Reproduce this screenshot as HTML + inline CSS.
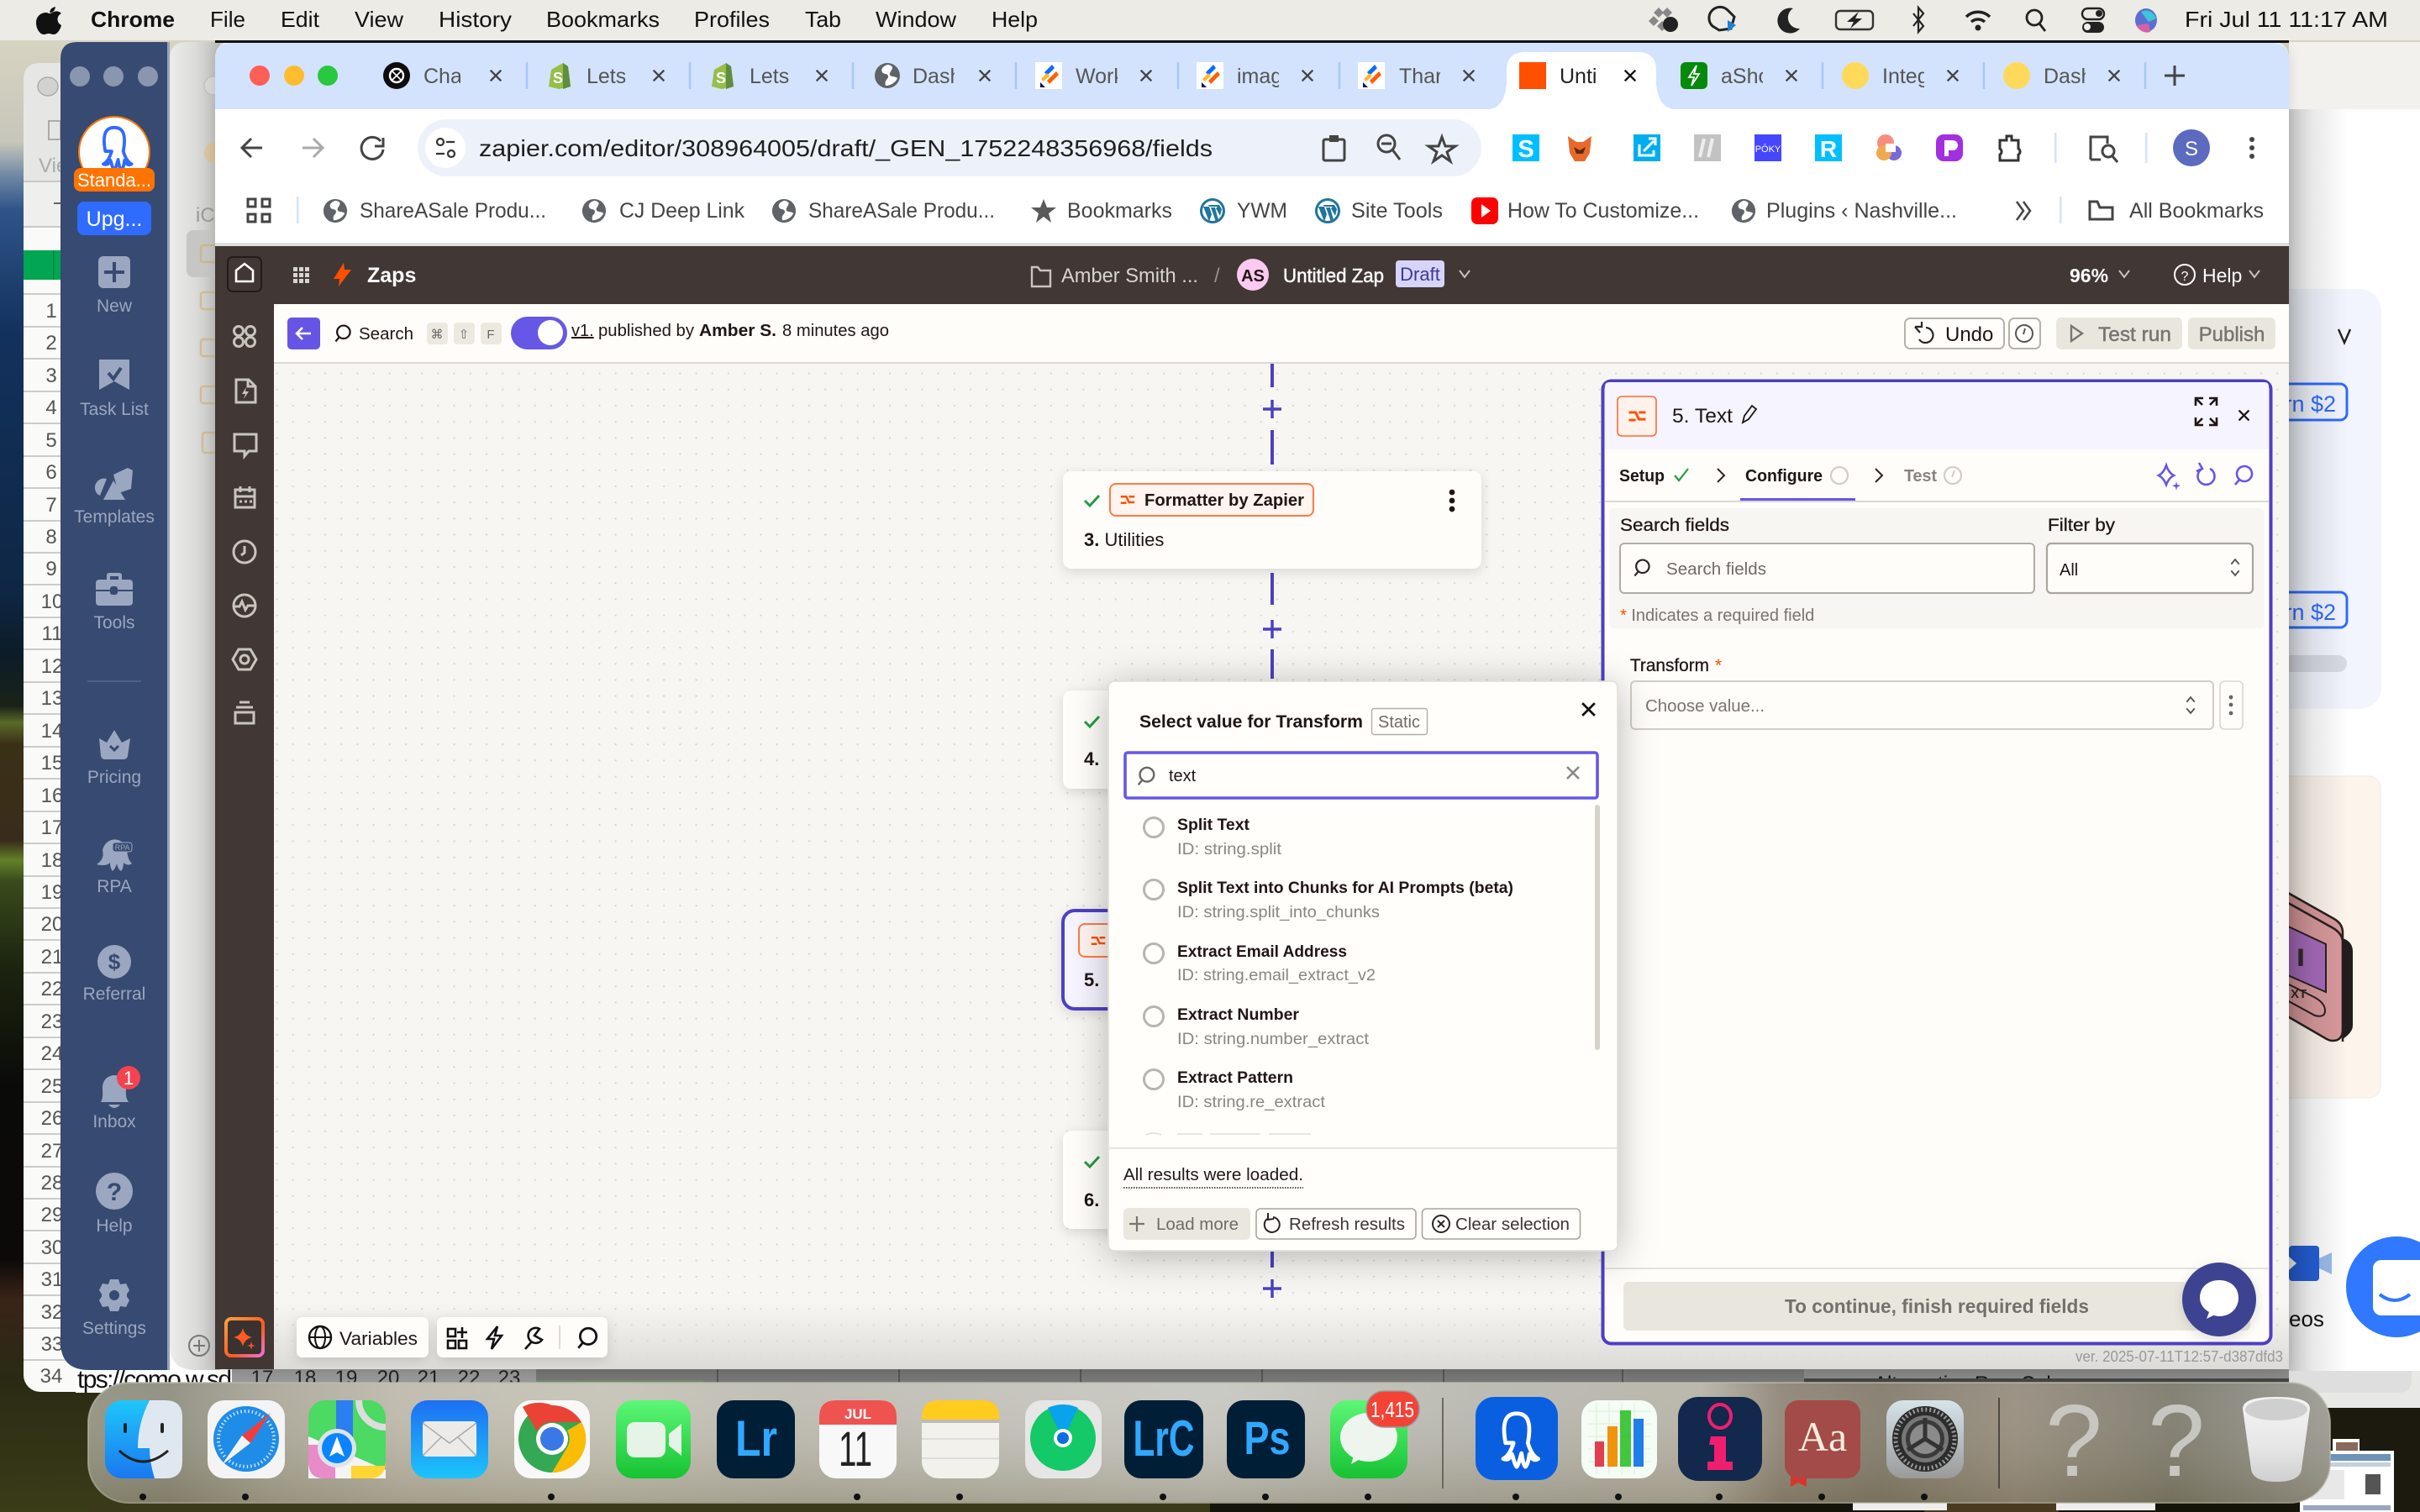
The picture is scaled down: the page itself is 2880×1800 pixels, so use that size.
<!DOCTYPE html>
<html><head><meta charset="utf-8"><title>Zapier editor</title>
<style>
html,body{margin:0;padding:0;width:2880px;height:1800px;overflow:hidden;background:#111}
svg{display:block;font-family:"Liberation Sans",sans-serif}
.m{font-size:26px;fill:#111}
.tb{font-size:25px;fill:#555}
.bm{font-size:25px;fill:#444}
.sl{font-size:21px;fill:#9ba6c0;text-anchor:middle}
.rn{font-size:24px;fill:#555;text-anchor:middle}
.d{font-size:21px;fill:#201515}
.b{font-weight:700}
.g{fill:#888}
.i{fill:none;stroke:#c9c4be;stroke-width:3}
.k{fill:none;stroke:#2b2523;stroke-width:2.5}
.t{fill:none;stroke:#444;stroke-width:3}
</style></head><body>
<svg width="2880" height="1800" viewBox="0 0 2880 1800" xmlns="http://www.w3.org/2000/svg">
<defs>
<linearGradient id="wall" x1="0" y1="0" x2="0" y2="1"><stop offset="0" stop-color="#ded9c4"/><stop offset=".094" stop-color="#c7c6bb"/><stop offset=".117" stop-color="#6d86a4"/><stop offset=".139" stop-color="#2f5488"/><stop offset=".222" stop-color="#12315c"/><stop offset=".389" stop-color="#0f2745"/><stop offset=".433" stop-color="#0c1c28"/><stop offset=".467" stop-color="#1a2218"/><stop offset=".478" stop-color="#5a6a28"/><stop offset=".492" stop-color="#3a3018"/><stop offset=".556" stop-color="#3a2c1a"/><stop offset=".569" stop-color="#63802a"/><stop offset=".583" stop-color="#3a4a1c"/><stop offset=".64" stop-color="#1c2410"/><stop offset=".72" stop-color="#0a0a08"/><stop offset=".833" stop-color="#0c0a08"/><stop offset=".86" stop-color="#3a2418"/><stop offset=".91" stop-color="#2a2a14"/><stop offset="1" stop-color="#3a3c18"/></linearGradient>
<linearGradient id="dock" x1="0" y1="0" x2="1" y2="0"><stop offset="0" stop-color="#8e8e7c"/><stop offset=".035" stop-color="#8a897a"/><stop offset=".08" stop-color="#a8a596"/><stop offset=".14" stop-color="#bcb8aa"/><stop offset=".23" stop-color="#c4c2b5"/><stop offset=".32" stop-color="#bcbab0"/><stop offset=".5" stop-color="#c6c6c0"/><stop offset=".62" stop-color="#b6b6ae"/><stop offset=".72" stop-color="#b5b1a5"/><stop offset=".755" stop-color="#8b8173"/><stop offset=".8" stop-color="#7e7767"/><stop offset=".86" stop-color="#93897a"/><stop offset=".93" stop-color="#787668"/><stop offset="1" stop-color="#989790"/></linearGradient>
<linearGradient id="dockv" x1="0" y1="0" x2="0" y2="1"><stop offset="0" stop-color="#fff" stop-opacity=".08"/><stop offset="1" stop-color="#6b6040" stop-opacity=".3"/></linearGradient>
<linearGradient id="w3" x1="0" y1="0" x2="1" y2="0"><stop offset="0" stop-color="#ecECEA"/><stop offset=".5" stop-color="#dcdcda"/><stop offset="1" stop-color="#bcbcba"/></linearGradient>
<linearGradient id="csh" x1="0" y1="0" x2="0" y2="1"><stop offset="0" stop-color="#dcdbd8" stop-opacity="0"/><stop offset="1" stop-color="#dcdbd8"/></linearGradient>
<linearGradient id="ai" x1="0" y1="0" x2="1" y2="1"><stop offset="0" stop-color="#ffa040"/><stop offset=".6" stop-color="#ff5a1f"/><stop offset="1" stop-color="#f070d0"/></linearGradient>
<linearGradient id="rsh" x1="0" y1="0" x2="1" y2="0"><stop offset="0" stop-color="#000" stop-opacity=".24"/><stop offset=".4" stop-color="#000" stop-opacity=".09"/><stop offset="1" stop-color="#000" stop-opacity="0"/></linearGradient>
<linearGradient id="fb" x1="0" y1="0" x2="0" y2="1"><stop offset="0" stop-color="#1fc6fb"/><stop offset="1" stop-color="#1a78ef"/></linearGradient>
<linearGradient id="ml" x1="0" y1="0" x2="0" y2="1"><stop offset="0" stop-color="#1d6ff2"/><stop offset="1" stop-color="#1dc4fb"/></linearGradient>
<linearGradient id="gr" x1="0" y1="0" x2="0" y2="1"><stop offset="0" stop-color="#5cf777"/><stop offset="1" stop-color="#17c232"/></linearGradient>
<linearGradient id="set" x1="0" y1="0" x2="0" y2="1"><stop offset="0" stop-color="#d6e4ea"/><stop offset="1" stop-color="#9a9a9a"/></linearGradient>
<linearGradient id="tr" x1="0" y1="0" x2="0" y2="1"><stop offset="0" stop-color="#f4f4f4"/><stop offset=".6" stop-color="#e6e6e6"/><stop offset="1" stop-color="#cfcfcf"/></linearGradient>
<pattern id="dots" width="19.2" height="19.2" patternUnits="userSpaceOnUse"><circle cx="3" cy="3" r="1.2" fill="#d8d6cf"/></pattern>
<filter id="sh" x="-30%" y="-30%" width="160%" height="160%"><feDropShadow dx="0" dy="6" stdDeviation="22" flood-color="#000" flood-opacity=".28"/></filter>
<filter id="ns" x="-10%" y="-15%" width="120%" height="140%"><feDropShadow dx="0" dy="4" stdDeviation="7" flood-color="#000" flood-opacity=".13"/></filter>
<clipPath id="altc"><rect x="2147" y="1630" width="700" height="11"/></clipPath>
<symbol id="globe" viewBox="0 0 32 32"><circle cx="16" cy="16" r="15" fill="#5f6368"/><path d="M16 3c-6 2-8 6-6 9s7 1 7 5-5 4-3 11c6 0 12-4 14-9-4-3-8-1-9-4s3-5 3-9c-1-2-4-3-6-3z" fill="#fff"/></symbol>
<symbol id="shop" viewBox="0 0 32 32"><path d="M6 9l14-8 6 4 3 24-14 3L3 29z" fill="#95bf47"/><path d="M20 1l6 4 3 24-9 3z" fill="#5e8e3e"/><text x="14" y="25" font-size="18" font-weight="700" fill="#fff" text-anchor="middle">S</text></symbol>
<symbol id="jot" viewBox="0 0 32 32"><rect width="32" height="32" fill="#fff"/><path d="M20 3l-9 9 3 4 9-9z" fill="#0a6cff"/><path d="M25 11l-11 11 3 4 11-11z" fill="#ff6100"/><path d="M14 13l-7 7 3 3 7-7z" fill="#ffb629"/><path d="M6 24v6h6z" fill="#0a1551"/></symbol>
<symbol id="wp" viewBox="0 0 32 32"><circle cx="16" cy="16" r="15" fill="#21759b"/><circle cx="16" cy="16" r="12" fill="#fff"/><path d="M5 11l7 18 3-9-3-9h-2zm8 0h9l-2 2 5 9 2-8-3-5H10z" fill="#21759b"/><path d="M14 12h5l4 15-3 2z" fill="#21759b"/></symbol>
<symbol id="sw" viewBox="0 0 32 32"><path d="M5 11h9l4 9h9M5 21h9M18 11h9" fill="none" stroke="#ff4f00" stroke-width="3.2"/></symbol>
<symbol id="x" viewBox="0 0 20 20"><path d="M3 3l14 14M17 3L3 17" fill="none" stroke="currentColor" stroke-width="2.6"/></symbol>
<symbol id="srch" viewBox="0 0 28 28"><circle cx="15" cy="12" r="9" fill="none" stroke="currentColor" stroke-width="2.6"/><path d="M9 19l-5 6" stroke="currentColor" stroke-width="2.6"/></symbol>
<symbol id="ud" viewBox="0 0 18 32"><path d="M3 11l6-7 6 7M3 21l6 7 6-7" fill="none" stroke="currentColor" stroke-width="2.4"/></symbol>
<symbol id="oct" viewBox="0 0 60 76"><path d="M16 42C10 10 20 5 30 5s20 5 14 37c3 10 7 17 13 20-5 3-9 0-11-6-1 8-3 14-5 16-3-3-4-11-5-17-2 6-3 13-6 17-3-3-4-11-6-16-2 6-6 8-11 6 6-3 10-10 13-20z" fill="none" stroke="currentColor" stroke-width="5" stroke-linejoin="round"/></symbol>
</defs>

<!-- wallpaper -->
<rect width="2880" height="1800" fill="url(#wall)"/>
<rect x="1440" y="1788" width="1440" height="12" fill="#15140a"/>
<rect x="2290" y="1788" width="160" height="12" fill="#4a3a20"/>
<rect x="105" y="1788" width="1335" height="12" fill="#3a3a1a"/>
<rect x="2760" y="1676" width="120" height="124" fill="#1c1a0e"/>
<rect x="2205" y="1788" width="112" height="10" fill="#eee"/><rect x="2447" y="1788" width="118" height="10" fill="#eee"/>
<rect x="2776" y="1713" width="32" height="30" fill="#fff"/><rect x="2780" y="1717" width="26" height="22" fill="#8a6a5c"/>
<rect x="2737" y="1727" width="112" height="73" fill="#fff"/><rect x="2741" y="1731" width="104" height="8" fill="#6d93b8"/><rect x="2741" y="1741" width="104" height="5" fill="#c4d0da"/><rect x="2750" y="1750" width="40" height="35" fill="#e8e8e8"/><rect x="2815" y="1755" width="18" height="24" fill="#555"/><rect x="2741" y="1792" width="104" height="6" fill="#9aa6c0"/>

<!-- spreadsheet window -->
<rect x="28" y="75" width="300" height="1582" rx="20" fill="#fafaf8"/>
<path d="M48 75h30v141H28V95q0-20 20-20z" fill="#e6e6e4"/>
<rect x="28" y="216" width="50" height="54" fill="#efefed"/>
<ellipse cx="57" cy="103" rx="12" ry="11" fill="#d2d2d0" stroke="#aaa" stroke-width="1.4"/>
<rect x="58" y="144" width="14" height="22" fill="none" stroke="#aaa" stroke-width="2"/>
<text x="46" y="205" font-size="24" fill="#aaa">Vie</text>
<path d="M28 216h50M28 270h50" stroke="#c8c8c6" stroke-width="2"/>
<rect x="64" y="241" width="10" height="2" fill="#666"/>
<rect x="28" y="298" width="50" height="35" fill="#00a651"/><rect x="63" y="298" width="1.5" height="35" fill="#068542"/>
<g stroke="#bbb" stroke-width="1.6"><path d="M28 350h50M28 389h50M28 427h50M28 466h50M28 504h50M28 543h50M28 581h50M28 620h50M28 658h50M28 696h50M28 735h50M28 773h50M28 812h50M28 850h50M28 889h50M28 927h50M28 966h50M28 1004h50M28 1043h50M28 1081h50M28 1119h50M28 1158h50M28 1196h50M28 1235h50M28 1273h50M28 1312h50M28 1350h50M28 1389h50M28 1427h50M28 1465h50M28 1504h50M28 1542h50M28 1581h50M28 1619h50"/></g>
<g class="rn">
<text x="61" y="378">1</text><text x="61" y="416">2</text><text x="61" y="455">3</text><text x="61" y="493">4</text><text x="61" y="532">5</text><text x="61" y="570">6</text><text x="61" y="609">7</text><text x="61" y="647">8</text><text x="61" y="685">9</text><text x="62" y="724">10</text><text x="62" y="762">11</text><text x="62" y="801">12</text><text x="62" y="839">13</text><text x="62" y="878">14</text><text x="62" y="916">15</text><text x="62" y="955">16</text><text x="62" y="993">17</text><text x="62" y="1032">18</text><text x="62" y="1070">19</text><text x="62" y="1108">20</text><text x="62" y="1147">21</text><text x="62" y="1185">22</text><text x="62" y="1224">23</text><text x="62" y="1262">24</text><text x="62" y="1301">25</text><text x="62" y="1339">26</text><text x="62" y="1378">27</text><text x="62" y="1416">28</text><text x="62" y="1454">29</text><text x="62" y="1493">30</text><text x="62" y="1531">31</text><text x="62" y="1570">32</text><text x="62" y="1608">33</text><text x="61" y="1646">34</text>
</g>
<rect x="90" y="1620" width="186" height="38" fill="#fff"/><rect x="276" y="1620" width="362" height="38" fill="#999"/><rect x="638" y="1620" width="1509" height="38" fill="#777"/>
<rect x="638" y="1643" width="199" height="3" fill="#6f8a6f"/>
<text x="92" y="1652" font-size="30" fill="#111" textLength="184">tps://como.w.sd</text>
<g font-size="24" fill="#222" text-anchor="middle"><text x="312" y="1648">17</text><text x="363" y="1648">18</text><text x="412" y="1648">19</text><text x="462" y="1648">20</text><text x="510" y="1648">21</text><text x="558" y="1648">22</text><text x="606" y="1648">23</text></g>
<path d="M854 1630v16M1070 1630v16M1286 1630v16M1502 1630v16M1718 1630v16M1931 1630v16" stroke="#555" stroke-width="2"/>
<rect x="2147" y="1630" width="640" height="11" fill="#8a8a88"/><rect x="2147" y="1641" width="640" height="6" fill="#444"/>
<text x="2230" y="1655" font-size="24" fill="#111" clip-path="url(#altc)">Alternative Row Color</text>

<!-- right window behind -->
<rect x="2724" y="1620" width="156" height="56" fill="#e8e8e6"/>
<rect x="2724" y="1620" width="146" height="38" rx="14" fill="#dedede"/>
<rect x="2724" y="50" width="156" height="1582" fill="#fff"/>
<rect x="2724" y="50" width="156" height="80" fill="#f2f1ee"/>
<rect x="2700" y="344" width="134" height="500" rx="26" fill="#f2f5fe"/>
<path d="M2783 392l7 16 7-16" fill="none" stroke="#222" stroke-width="2.4"/>
<rect x="2680" y="457" width="113" height="43" rx="8" fill="none" stroke="#2f6bff" stroke-width="3"/>
<text x="2780" y="490" font-size="27" fill="#2f6bff" text-anchor="end">rn $2</text>
<rect x="2680" y="705" width="113" height="42" rx="8" fill="none" stroke="#2f6bff" stroke-width="3"/>
<text x="2780" y="738" font-size="27" fill="#2f6bff" text-anchor="end">rn $2</text>
<rect x="2700" y="780" width="93" height="20" rx="10" fill="#d8dbe4"/>
<rect x="2700" y="924" width="133" height="383" rx="14" fill="#fdf5ec" stroke="#f0f0ee" stroke-width="1.5"/>
<path d="M2700 1050l78 44q10 6 10 16l0 115q0 14-12 14-3 0-7-2l-69-40z" fill="#d99a9c" stroke="#2a2120" stroke-width="2.5"/>
<path d="M2700 1062l75 42q13 7 13 18v118" fill="none" stroke="#2a2120" stroke-width="2.5"/>
<path d="M2788 1117q12 4 12 16v88q0 8-12 16z" fill="#221c1c"/>
<path d="M2700 1092l68 32v57l-68-30z" fill="#a86cbc" stroke="#2a2120" stroke-width="2"/>
<text x="2730" y="1150" font-size="30" fill="#352a2a" textLength="16" lengthAdjust="spacingAndGlyphs">I</text>
<path d="M2700 1160l54 27q13 7 13 16t-12 6l-55-30z" fill="none" stroke="#2a2120" stroke-width="2"/>
<text x="2726" y="1188" font-size="15" font-weight="700" fill="#352a2a">XT</text>
<rect x="2724" y="1483" width="36" height="42" rx="4" fill="#2460d8"/><path d="M2760 1498l15-7v26l-15-7z" fill="#9cbcec"/><path d="M2724 1496l9 8-9 8z" fill="#fff"/>
<text x="2724" y="1579" font-size="26" fill="#111">eos</text>
<circle cx="2852" cy="1532" r="60" fill="#2f78ff"/><rect x="2824" y="1500" width="70" height="66" rx="10" fill="#fff"/><path d="M2832 1541q18 14 36 0" fill="none" stroke="#2f78ff" stroke-width="4"/>
<rect x="2724" y="130" width="70" height="1502" fill="url(#rsh)"/>

<!-- Octopus sidebar -->
<path d="M92 50H200V1631H106q-34 0-34-34V70q0-20 20-20z" fill="#374a72"/>
<rect x="199" y="50" width="3" height="1581" fill="#97a3bb"/>
<circle cx="95" cy="91" r="12" fill="#8a96b0"/><circle cx="135" cy="91" r="12" fill="#8a96b0"/><circle cx="176" cy="91" r="12" fill="#8a96b0"/>
<circle cx="136" cy="181" r="42" fill="#fff" stroke="#ff7a00" stroke-width="2"/>
<use href="#oct" x="108" y="148" width="56" height="58" color="#2f6bff"/>
<rect x="88" y="200" width="96" height="28" rx="8" fill="#ff7300"/>
<text x="136" y="222" font-size="22" fill="#fff" text-anchor="middle">Standa...</text>
<rect x="92" y="240" width="88" height="40" rx="8" fill="#2f6bff"/>
<text x="136" y="269" font-size="25" fill="#fff" text-anchor="middle">Upg...</text>
<g fill="#9ba6c0">
<rect x="117" y="305" width="38" height="38" rx="6"/>
<path d="M118 428h36v36l-18-10-18 10z"/>
<path d="M135 565l17-8 6 3-2 22-15 5zM113 582a11 11 0 0 1 14-12l-8 20a10 10 0 0 1-6-8zM135 572l14 23h-26z"/>
<rect x="114" y="690" width="44" height="31" rx="4"/><path d="M127 690v-5q0-3 3-3h12q3 0 3 3v5h-4v-4h-10v4z"/>
<path d="M118 879l9 5 9-15 9 15 10-5-3 21q-1 4-5 4h-22q-4 0-5-4z"/>
<path d="M122 1012a15 17 0 0 1 29 0c1 8 2 12 6 16-4 3-8 1-10-1 0 4-1 8-3 10-3-2-4-5-5-9-1 4-3 7-5 9-2-2-3-6-3-10-3 3-9 4-16 2 6-4 9-9 7-17z"/>
<circle cx="136" cy="1145" r="20"/>
<path d="M120 1312c3-6 2-10 2-18a14 14 0 0 1 28 0c0 8-1 12 3 18z"/><path d="M129 1315q7 8 14 0z"/>
<circle cx="136" cy="1418" r="22"/>
<circle cx="136" cy="1542" r="15"/>
<path d="M131 1523h10l2 6 7-1 4 8-4 6 4 6-4 8-7-1-2 6h-10l-2-6-7 1-4-8 4-6-4-6 4-8 7 1z"/>
</g>
<path d="M136 312v24M124 324h24" stroke="#374a72" stroke-width="4"/>
<path d="M129 444l6 7 9-13" fill="none" stroke="#374a72" stroke-width="4"/>
<rect x="114" y="702" width="44" height="2" fill="#374a72"/><rect x="131" y="698" width="9" height="10" rx="3" fill="#374a72"/>
<path d="M131 888l5 5 5-5" fill="none" stroke="#374a72" stroke-width="3"/>
<rect x="134" y="1003" width="23" height="11" rx="3" fill="#374a72" stroke="#9ba6c0" stroke-width="1"/>
<text x="145.500" y="1012" font-size="9" fill="#9ba6c0" text-anchor="middle">RPA</text>
<text x="136" y="1154" font-size="26" font-weight="700" fill="#374a72" text-anchor="middle">$</text>
<text x="136" y="1429" font-size="30" font-weight="700" fill="#374a72" text-anchor="middle">?</text>
<circle cx="136" cy="1542" r="6" fill="#374a72"/>
<circle cx="153" cy="1283" r="14" fill="#f4434f"/><text x="153" y="1291" font-size="22" fill="#fff" text-anchor="middle">1</text>
<text class="sl" x="136" y="371">New</text>
<text class="sl" x="136" y="494">Task List</text>
<text class="sl" x="136" y="622">Templates</text>
<text class="sl" x="136" y="748">Tools</text>
<rect x="104" y="810" width="64" height="2" fill="#4f5f85"/>
<text class="sl" x="136" y="932">Pricing</text>
<text class="sl" x="136" y="1062">RPA</text>
<text class="sl" x="136" y="1190">Referral</text>
<text class="sl" x="136" y="1342">Inbox</text>
<text class="sl" x="136" y="1466">Help</text>
<text class="sl" x="136" y="1588">Settings</text>

<!-- window 3 -->
<path d="M222 50h40V1631H232q-30 0-30-30V70q0-20 20-20z" fill="url(#w3)"/>
<circle cx="254" cy="102" r="11" fill="#d8d8d6" stroke="#bbb"/>
<circle cx="256" cy="182" r="13" fill="#dcc08c" opacity=".7"/>
<text x="233" y="264" font-size="24" fill="#999">iC</text>
<rect x="222" y="274" width="40" height="56" rx="8" fill="#c6c6c4"/>
<g opacity=".55"><rect x="239" y="292" width="22" height="20" rx="3" fill="none" stroke="#d0aa68" stroke-width="2.5"/>
<rect x="239" y="348" width="22" height="20" rx="3" fill="none" stroke="#d0aa68" stroke-width="2.5"/>
<rect x="239" y="404" width="22" height="20" rx="3" fill="none" stroke="#d0aa68" stroke-width="2.5"/>
<rect x="239" y="460" width="22" height="20" rx="3" fill="none" stroke="#d0aa68" stroke-width="2.5"/>
<rect x="241" y="515" width="20" height="24" rx="3" fill="none" stroke="#d0aa68" stroke-width="2.5"/></g>
<circle cx="237" cy="1602" r="12" fill="none" stroke="#777" stroke-width="2"/><path d="M237 1595v14M230 1602h14" stroke="#777" stroke-width="2"/>

<!-- browser -->
<g filter="url(#ns)"><path d="M276 50H2704q20 0 20 20V1610q0 20-20 20H276q-20 0-20-20V70q0-20 20-20z" fill="#f7f6f2"/></g>
<rect x="256" y="48" width="2468" height="3" fill="#111"/>
<path d="M276 51H2704q20 0 20 20V130H256V71q0-20 20-20z" fill="#d3e3fd"/>
<rect x="256" y="130" width="2468" height="160" fill="#fff"/>
<rect x="256" y="289" width="2468" height="4" fill="#dfdfdb"/>

<!-- tab strip -->
<circle cx="309" cy="90" r="12" fill="#ff5f57"/><circle cx="350" cy="90" r="12" fill="#febc2e"/><circle cx="390" cy="90" r="12" fill="#28c840"/>
<path d="M1770 130q20 0 23-30V84q0-22 22-22h134q22 0 22 22v16q3 30 23 30z" fill="#fff"/>
<circle cx="472" cy="90" r="16" fill="#0d0d0d"/><circle cx="472" cy="90" r="8" fill="none" stroke="#fff" stroke-width="2.4"/><path d="M466 84l12 12M478 84l-12 12" stroke="#fff" stroke-width="1.6"/>
<use href="#shop" x="650" y="74" width="32" height="32"/><use href="#shop" x="844" y="74" width="32" height="32"/>
<use href="#globe" x="1040" y="74" width="32" height="32"/>
<use href="#jot" x="1232" y="74" width="32" height="32"/><use href="#jot" x="1424" y="74" width="32" height="32"/><use href="#jot" x="1616" y="74" width="32" height="32"/>
<rect x="1808" y="74" width="32" height="32" fill="#ff4f00"/>
<rect x="2000" y="74" width="32" height="32" rx="6" fill="#058a0a"/><path d="M2019 78l-9 14h6l-3 10 9-14h-6z" fill="none" stroke="#fff" stroke-width="1.8"/>
<circle cx="2208" cy="90" r="16" fill="#ffd95a"/><circle cx="2400" cy="90" r="16" fill="#ffd95a"/>
<g class="tb">
<text x="504" y="99">Chat</text><text x="698" y="99">Lets</text><text x="892" y="99">Lets</text><text x="1086" y="99">Dash</text><text x="1280" y="99">Work</text><text x="1472" y="99">imag</text><text x="1665" y="99">Thar</text><text x="1856" y="99" style="fill:#222">Unti</text><text x="2048" y="99">aSho</text><text x="2240" y="99">Integ</text><text x="2432" y="99">Dash</text>
</g>
<g fill="#d3e3fd"><rect x="548" y="76" width="18" height="30"/><rect x="744" y="76" width="18" height="30"/><rect x="940" y="76" width="18" height="30"/><rect x="1136" y="76" width="18" height="30"/><rect x="1330" y="76" width="18" height="30"/><rect x="1522" y="76" width="18" height="30"/><rect x="1714" y="76" width="18" height="30"/><rect x="2098" y="76" width="18" height="30"/><rect x="2290" y="76" width="18" height="30"/><rect x="2482" y="76" width="18" height="30"/></g>
<rect x="1902" y="76" width="18" height="30" fill="#fff"/>
<g color="#444"><use href="#x" x="581" y="81" width="18" height="18"/><use href="#x" x="775" y="81" width="18" height="18"/><use href="#x" x="969" y="81" width="18" height="18"/><use href="#x" x="1163" y="81" width="18" height="18"/><use href="#x" x="1355" y="81" width="18" height="18"/><use href="#x" x="1547" y="81" width="18" height="18"/><use href="#x" x="1739" y="81" width="18" height="18"/><use href="#x" x="1931" y="81" width="18" height="18" color="#111"/><use href="#x" x="2123" y="81" width="18" height="18"/><use href="#x" x="2315" y="81" width="18" height="18"/><use href="#x" x="2507" y="81" width="18" height="18"/></g>
<path d="M627 74v32M821 74v32M1015 74v32M1209 74v32M1402 74v32M1594 74v32M2169 74v32M2361 74v32M2553 74v32" stroke="#a8c7fa" stroke-width="2.5"/>
<path d="M2588 78v24M2576 90h24" stroke="#444" stroke-width="3"/>

<!-- toolbar -->
<path d="M312 176h-23M299 165l-11 11 11 11" class="t"/>
<path d="M360 176h23M373 165l11 11-11 11" fill="none" stroke="#aaa" stroke-width="3"/>
<path d="M453 168a13 13 0 1 0 3 10M456 164v10h-10" class="t"/>
<rect x="497" y="142" width="1266" height="68" rx="34" fill="#edf2fa"/>
<circle cx="530" cy="176" r="24" fill="#fff"/>
<circle cx="524" cy="169" r="4" fill="none" stroke="#333" stroke-width="2.2"/><path d="M531 169h10M519 183h10" stroke="#333" stroke-width="2.2"/><circle cx="537" cy="183" r="4" fill="none" stroke="#333" stroke-width="2.2"/>
<text x="570" y="186" font-size="28" fill="#1f1f1f" textLength="873" lengthAdjust="spacingAndGlyphs">zapier.com/editor/308964005/draft/_GEN_1752248356968/fields</text>
<rect x="1575" y="166" width="25" height="25" rx="2" class="t"/><rect x="1582" y="161" width="11" height="8" fill="#444"/>
<circle cx="1650" cy="171" r="10" class="t"/><path d="M1644 171h12M1657 178l9 12" class="t"/>
<path d="M1716 163l4 11h12l-10 7 4 11-10-7-10 7 4-11-10-7h12z" class="t"/>
<rect x="1800" y="160" width="32" height="32" fill="#00bfff"/><text x="1816" y="187" font-size="29" font-weight="700" fill="#fff" text-anchor="middle">S</text>
<path d="M1866 162l10 7h8l10-7-2 20-6 10h-12l-6-10z" fill="#e8692c"/><path d="M1873 175l7 4h0l7-4-3 8h-8z" fill="#5c2a13"/>
<rect x="1944" y="160" width="32" height="32" fill="#00aeef"/><path d="M1951 172v13h17v-6" fill="none" stroke="#fff" stroke-width="3"/><path d="M1956 180l12-12M1962 165h8v8" fill="none" stroke="#fff" stroke-width="3"/>
<rect x="2016" y="160" width="32" height="32" fill="#c2c2c2"/><path d="M2028 165l-5 22M2038 165l-5 22" stroke="#eee" stroke-width="4"/>
<rect x="2088" y="160" width="32" height="32" fill="#4646ff"/><text x="2104" y="181" font-size="11" fill="#fff" text-anchor="middle">PŌKY</text>
<rect x="2160" y="160" width="32" height="32" fill="#00bfff"/><text x="2176" y="187" font-size="28" font-weight="700" fill="#fff" text-anchor="middle">R</text>
<circle cx="2244" cy="170" r="10" fill="#f78d80"/><circle cx="2254" cy="182" r="9" fill="#7b68d8"/><circle cx="2242" cy="182" r="9" fill="#f0a850"/><rect x="2244" y="171" width="12" height="10" fill="#fff"/>
<rect x="2304" y="160" width="32" height="32" rx="9" fill="#a32fe0"/><path d="M2314 167h10a6 6 0 0 1 0 12h-5v7h-5z" fill="#fff"/>
<path d="M2380 167h8v-5h6v5h8v10a4 4 0 0 1 0 7v7h-22v-7a4 4 0 0 0 0-7z" fill="none" stroke="#333" stroke-width="3"/>
<rect x="2445" y="158" width="2.5" height="36" fill="#d3e3fd"/>
<path d="M2488 190v-27h20v8M2488 190h12" class="t"/><circle cx="2509" cy="180" r="7" class="t"/><path d="M2514 186l6 7" class="t"/>
<rect x="2553" y="158" width="2.5" height="36" fill="#d3e3fd"/>
<circle cx="2608" cy="176" r="22" fill="#5c6bc0"/><text x="2608" y="185" font-size="24" fill="#fff" text-anchor="middle">S</text>
<circle cx="2680" cy="166" r="3" fill="#444"/><circle cx="2680" cy="176" r="3" fill="#444"/><circle cx="2680" cy="186" r="3" fill="#444"/>

<!-- bookmarks -->
<g class="t"><rect x="295" y="237" width="9" height="9"/><rect x="312" y="237" width="9" height="9"/><rect x="295" y="255" width="9" height="9"/><rect x="312" y="255" width="9" height="9"/></g>
<rect x="353" y="234" width="2.5" height="32" fill="#d3e3fd"/>
<use href="#globe" x="384" y="236" width="30" height="30"/><use href="#globe" x="692" y="236" width="30" height="30"/><use href="#globe" x="918" y="236" width="30" height="30"/><use href="#globe" x="2060" y="236" width="30" height="30"/>
<path d="M1242 237l4 10h11l-9 7 3 11-9-7-9 7 3-11-9-7h11z" fill="#5a5a5a"/>
<use href="#wp" x="1427" y="235" width="32" height="32"/><use href="#wp" x="1564" y="235" width="32" height="32"/>
<rect x="1751" y="235" width="32" height="32" rx="7" fill="#f00"/><path d="M1763 243l11 8-11 8z" fill="#fff"/>
<path d="M2408 240l8 11-8 11M2400 240l8 11-8 11" fill="none" stroke="#444" stroke-width="2.5"/>
<rect x="2451" y="234" width="2.5" height="32" fill="#d3e3fd"/>
<path d="M2487 240h9l3 7h15v14h-27z" fill="none" stroke="#444" stroke-width="3"/>
<g class="bm">
<text x="428" y="259" textLength="222" lengthAdjust="spacingAndGlyphs">ShareASale Produ...</text>
<text x="737" y="259" textLength="149" lengthAdjust="spacingAndGlyphs">CJ Deep Link</text>
<text x="962" y="259" textLength="222" lengthAdjust="spacingAndGlyphs">ShareASale Produ...</text>
<text x="1270" y="259" textLength="125" lengthAdjust="spacingAndGlyphs">Bookmarks</text>
<text x="1472" y="259" textLength="60" lengthAdjust="spacingAndGlyphs">YWM</text>
<text x="1608" y="259" textLength="109" lengthAdjust="spacingAndGlyphs">Site Tools</text>
<text x="1794" y="259" textLength="228" lengthAdjust="spacingAndGlyphs">How To Customize...</text>
<text x="2102" y="259" textLength="227" lengthAdjust="spacingAndGlyphs">Plugins ‹ Nashville...</text>
<text x="2534" y="259" textLength="160" lengthAdjust="spacingAndGlyphs">All Bookmarks</text>
</g>

<!-- Zapier header -->
<rect x="256" y="293" width="2468" height="69" fill="#413735"/>
<rect x="256" y="362" width="70" height="1268" fill="#413735"/>
<rect x="271" y="306" width="40" height="41" rx="6" fill="none" stroke="#221c1b" stroke-width="2"/>
<path d="M281 335v-13l10-8 10 8v13z" fill="none" stroke="#fff" stroke-width="2.6"/>
<g fill="#d8d4cf"><rect x="349" y="318" width="5" height="5"/><rect x="356" y="318" width="5" height="5"/><rect x="363" y="318" width="5" height="5"/><rect x="349" y="325" width="5" height="5"/><rect x="356" y="325" width="5" height="5"/><rect x="363" y="325" width="5" height="5"/><rect x="349" y="332" width="5" height="5"/><rect x="356" y="332" width="5" height="5"/><rect x="363" y="332" width="5" height="5"/></g>
<path d="M409 313l-12 19h7l-1 9 15-20h-8z" fill="#ff4f00"/>
<text x="437" y="336" font-size="25" font-weight="700" fill="#fff">Zaps</text>
<path d="M1228 318h7l3 4h12v19h-22z" fill="none" stroke="#c9c4be" stroke-width="2.4"/>
<text x="1263" y="336" font-size="24" fill="#d8d4cf" textLength="163" lengthAdjust="spacingAndGlyphs">Amber Smith ...</text>
<text x="1445" y="336" font-size="24" fill="#9a928f">/</text>
<circle cx="1491" cy="327" r="19" fill="#fcc9f0"/><text x="1491" y="335" font-size="20" font-weight="700" fill="#201515" text-anchor="middle">AS</text>
<text x="1527" y="336" font-size="23" fill="#fff" stroke="#fff" stroke-width=".5" textLength="120" lengthAdjust="spacingAndGlyphs">Untitled Zap</text>
<rect x="1661" y="310" width="58" height="32" rx="4" fill="#d6d4f9"/><text x="1690" y="334" font-size="22" fill="#3d3a8f" text-anchor="middle">Draft</text>
<path d="M1737 322l6 8 6-8" fill="none" stroke="#c9c4be" stroke-width="2"/>
<text x="2463" y="336" font-size="23" font-weight="700" fill="#fff">96%</text>
<path d="M2522 322l6 8 6-8" fill="none" stroke="#c9c4be" stroke-width="2"/>
<circle cx="2600" cy="327" r="12" fill="none" stroke="#fff" stroke-width="2"/><text x="2600" y="334" font-size="16" fill="#fff" text-anchor="middle">?</text>
<text x="2621" y="336" font-size="23" fill="#fff">Help</text>
<path d="M2677 322l6 8 6-8" fill="none" stroke="#c9c4be" stroke-width="2"/>

<!-- rail icons -->
<g class="i">
<circle cx="284" cy="394" r="5.5"/><circle cx="298" cy="394" r="5.5"/><circle cx="284" cy="407" r="5.5"/><circle cx="298" cy="407" r="5.5"/>
<path d="M281 452h15l8 8v19h-23z"/><path d="M295 452v8h8"/><path d="M293 461l-5 8h4l-2 6 6-9h-4z" fill="#c9c4be" stroke="none"/>
<path d="M279 517h26v20h-9l-5 6v-6h-12z"/>
<rect x="280" y="583" width="23" height="21"/><path d="M286 579v7M297 579v7M280 591h23" /><path d="M285 597h3M291 597h3M297 597h3"/>
<circle cx="291" cy="657" r="13"/><path d="M291 650v8l-4 3"/>
<circle cx="291" cy="721" r="13"/><path d="M278 722h7l3-6 4 10 3-5h9"/>
<path d="M284 773h14l7 12-7 12h-14l-7-12z"/><circle cx="291" cy="785" r="5"/>
<path d="M285 836h12M281 842h20M280 848h22v13h-22z"/>
</g>

<!-- subheader -->
<path d="M338 362H2724V432H326V374q0-12 12-12z" fill="#fffdf9"/>
<rect x="326" y="431" width="2398" height="2" fill="#dad8d0"/>
<rect x="342" y="378" width="39" height="38" rx="5" fill="#6655e4"/><path d="M370 397h-17M360 390l-7 7 7 7" fill="none" stroke="#fff" stroke-width="2.6"/>
<use href="#srch" x="396" y="385" width="24" height="24" color="#201515"/>
<text class="d" x="427" y="404" textLength="65" lengthAdjust="spacingAndGlyphs" style="font-size:20px">Search</text>
<g fill="#eceae0"><rect x="508" y="384" width="25" height="26" rx="4"/><rect x="540" y="384" width="25" height="26" rx="4"/><rect x="572" y="384" width="25" height="26" rx="4"/></g>
<g font-size="15" fill="#666" text-anchor="middle"><text x="520" y="403">⌘</text><text x="552" y="403">⇧</text><text x="584" y="403">F</text></g>
<rect x="608" y="377" width="67" height="39" rx="19.5" fill="#6657e6"/><circle cx="655" cy="396" r="15" fill="#fff"/>
<text x="680" y="400" font-size="20" fill="#201515" text-decoration="underline">v1.</text>
<text x="712" y="400" font-size="20" fill="#201515" textLength="114" lengthAdjust="spacingAndGlyphs">published by</text>
<text x="832" y="400" font-size="20" font-weight="700" fill="#201515" textLength="92" lengthAdjust="spacingAndGlyphs">Amber S.</text>
<text x="931" y="400" font-size="20" fill="#201515" textLength="127" lengthAdjust="spacingAndGlyphs">8 minutes ago</text>
<rect x="2267" y="379" width="118" height="36" rx="6" fill="#fffefa" stroke="#b5b2aa" stroke-width="2"/>
<path d="M2292 390a9 9 0 1 1-8 14M2279 389h8v-6M2279 389l6 7" fill="none" stroke="#2b2523" stroke-width="2.2"/>
<text x="2315" y="406" font-size="24" fill="#201515">Undo</text>
<rect x="2391" y="379" width="37" height="36" rx="6" fill="#fffefa" stroke="#b5b2aa" stroke-width="2"/><circle cx="2409" cy="397" r="10" fill="none" stroke="#555" stroke-width="2"/><path d="M2410 391l-2 7" stroke="#555" stroke-width="2"/>
<rect x="2447" y="378" width="150" height="38" rx="6" fill="#e9e7dd"/><path d="M2465 388l13 9-13 9z" fill="none" stroke="#7a7470" stroke-width="2.4"/><text x="2497" y="406" font-size="24" fill="#7a7470" stroke="#7a7470" stroke-width=".5" textLength="87" lengthAdjust="spacingAndGlyphs">Test run</text>
<rect x="2604" y="378" width="104" height="38" rx="6" fill="#e9e7dd"/><text x="2656" y="406" font-size="24" fill="#7a7470" stroke="#7a7470" stroke-width=".5" text-anchor="middle">Publish</text>

<!-- canvas -->
<rect x="326" y="433" width="2398" height="1197" fill="#f7f6f2"/>
<rect x="326" y="433" width="2398" height="1197" fill="url(#dots)"/>
<rect x="326" y="1550" width="2398" height="80" fill="url(#csh)"/>
<path d="M1514 433v28M1514 512v41M1514 682v38M1514 773v35M1514 1490v19" stroke="#4d3fc2" stroke-width="4"/>
<path d="M1514 476v22M1503 487h22M1514 738v22M1503 749h22M1514 1523v22M1503 1534h22" stroke="#4d3fc2" stroke-width="3.5"/>

<!-- node 3 -->
<rect x="1265" y="561" width="498" height="116" rx="10" fill="#fffdf9" filter="url(#ns)"/>
<path d="M1291 596l6 6 11-12" fill="none" stroke="#1f9d45" stroke-width="3"/>
<rect x="1321" y="576" width="242" height="38" rx="7" fill="#fff4ef" stroke="#ff7a45" stroke-width="2"/>
<use href="#sw" x="1330" y="583" width="24" height="24"/>
<text x="1362" y="602" font-size="20" font-weight="700" fill="#201515" textLength="190" lengthAdjust="spacingAndGlyphs">Formatter by Zapier</text>
<text x="1290" y="650" font-size="22" fill="#201515"><tspan font-weight="700">3.</tspan> Utilities</text>
<circle cx="1728" cy="586" r="3.4" fill="#201515"/><circle cx="1728" cy="596" r="3.4" fill="#201515"/><circle cx="1728" cy="606" r="3.4" fill="#201515"/>
<!-- node 4 -->
<rect x="1265" y="822" width="220" height="117" rx="10" fill="#fffdf9" filter="url(#ns)"/>
<path d="M1291 859l6 6 11-12" fill="none" stroke="#1f9d45" stroke-width="3"/>
<text x="1290" y="911" font-size="22" font-weight="700" fill="#201515">4.</text>
<!-- node 5 -->
<rect x="1265" y="1084" width="220" height="117" rx="14" fill="#f5f4ff" stroke="#4d3fc2" stroke-width="4" filter="url(#ns)"/>
<rect x="1284" y="1100" width="60" height="39" rx="7" fill="#fff4ef" stroke="#ff7a45" stroke-width="2"/>
<use href="#sw" x="1295" y="1108" width="24" height="24"/>
<text x="1290" y="1174" font-size="22" font-weight="700" fill="#201515">5.</text>
<!-- node 6 -->
<rect x="1265" y="1346" width="220" height="117" rx="10" fill="#fffdf9" filter="url(#ns)"/>
<path d="M1291 1383l6 6 11-12" fill="none" stroke="#1f9d45" stroke-width="3"/>
<text x="1290" y="1436" font-size="22" font-weight="700" fill="#201515">6.</text>

<!-- panel -->
<rect x="1907.5" y="453.5" width="795" height="1146" rx="10" fill="#fffdf9" stroke="#4d3fc2" stroke-width="4"/>
<path d="M1910 460q0-5 5-5h780q5 0 5 5v75h-790z" fill="#f5f4ff"/>
<rect x="1925" y="472" width="46" height="47" rx="5" fill="#fff2eb" stroke="#ff6a30" stroke-width="1.6"/>
<use href="#sw" x="1934" y="481" width="29" height="29"/>
<text x="1990" y="503" font-size="24" fill="#201515" textLength="72" lengthAdjust="spacingAndGlyphs">5. Text</text>
<path d="M2074 503l2-8 9-12 5 4-9 12z" fill="none" stroke="#201515" stroke-width="1.8"/>
<path d="M2613 483v-9h9M2613 474l8 8M2638 483v-9h-9M2638 474l-8 8M2613 497v9h9M2613 506l8-8M2638 497v9h-9M2638 506l-8-8" fill="none" stroke="#201515" stroke-width="2.6"/>
<use href="#x" x="2662" y="486" width="17" height="17" color="#201515"/>
<text x="1927" y="573" font-size="20" font-weight="700" fill="#201515" textLength="54" lengthAdjust="spacingAndGlyphs">Setup</text>
<path d="M1993 566l5 6 11-14" fill="none" stroke="#1f9d45" stroke-width="2.2"/>
<path d="M2044 558l8 8-8 8M2232 558l8 8-8 8" fill="none" stroke="#2b2523" stroke-width="2"/>
<text x="2077" y="573" font-size="20" font-weight="700" fill="#201515" textLength="92" lengthAdjust="spacingAndGlyphs">Configure</text>
<circle cx="2189" cy="566" r="10" fill="none" stroke="#d0cec6" stroke-width="2.2"/>
<text x="2266" y="573" font-size="20" font-weight="700" fill="#8a8480" textLength="39" lengthAdjust="spacingAndGlyphs">Test</text>
<circle cx="2324" cy="566" r="10" fill="none" stroke="#d0cec6" stroke-width="2.2"/><path d="M2326 560l-3 8" stroke="#d0cec6" stroke-width="2"/>
<path d="M2578 554q3 9 9 12-6 3-9 11-3-8-9-11 6-3 9-12z" fill="none" stroke="#6657e6" stroke-width="2.6"/><path d="M2590 573l1 4 4 1-4 2-1 4-1-4-4-2 4-1z" fill="#6657e6"/>
<path d="M2621 558a10 10 0 1 0 9 0M2617 551l4 7-7 3" fill="none" stroke="#6657e6" stroke-width="2.6"/>
<use href="#srch" x="2656" y="551" width="28" height="30" color="#6657e6"/>
<rect x="2071" y="593" width="137" height="3" fill="#6657e6"/>
<rect x="1910" y="596" width="790" height="2" fill="#dad8d0"/>
<rect x="1915" y="605" width="780" height="143" rx="6" fill="#f7f6f2"/>
<text x="1928" y="632" font-size="21" fill="#201515" stroke="#201515" stroke-width=".3" textLength="130" lengthAdjust="spacingAndGlyphs">Search fields</text>
<text x="2437" y="632" font-size="21" fill="#201515" stroke="#201515" stroke-width=".3" textLength="80" lengthAdjust="spacingAndGlyphs">Filter by</text>
<rect x="1928" y="647" width="493" height="59" rx="5" fill="#fffdf9" stroke="#b0ada5" stroke-width="2"/>
<use href="#srch" x="1942" y="664" width="24" height="24" color="#2b2523"/>
<text x="1983" y="684" font-size="20" fill="#6f6a66" textLength="119" lengthAdjust="spacingAndGlyphs">Search fields</text>
<rect x="2436" y="647" width="245" height="59" rx="5" fill="#fffdf9" stroke="#a9a69e" stroke-width="2.2"/>
<text x="2451" y="685" font-size="20" fill="#201515">All</text>
<use href="#ud" x="2652" y="663" width="16" height="25" color="#555"/>
<text x="1928" y="739" font-size="20" fill="#7a7470"><tspan fill="#ff4f00">*</tspan> <tspan>Indicates a required field</tspan></text>
<text x="1940" y="799" font-size="21" fill="#201515" stroke="#201515" stroke-width=".3" textLength="94" lengthAdjust="spacingAndGlyphs">Transform</text>
<text x="2041" y="799" font-size="21" fill="#ff4f00">*</text>
<rect x="1941" y="811" width="693" height="57" rx="5" fill="#fffdf9" stroke="#d0cec6" stroke-width="2"/>
<text x="1958" y="847" font-size="20" fill="#7a7470" textLength="142" lengthAdjust="spacingAndGlyphs">Choose value...</text>
<use href="#ud" x="2599" y="827" width="16" height="25" color="#555"/>
<rect x="2642" y="811" width="27" height="57" rx="5" fill="#fffdf9" stroke="#dad8d0" stroke-width="1.6"/>
<circle cx="2655" cy="830" r="2.4" fill="#666"/><circle cx="2655" cy="839" r="2.4" fill="#666"/><circle cx="2655" cy="849" r="2.4" fill="#666"/>
<rect x="1910" y="1509" width="790" height="2" fill="#e5e3dc"/>
<rect x="1932" y="1526" width="746" height="58" rx="6" fill="#e9e7dd"/>
<text x="2305" y="1563" font-size="23" font-weight="700" fill="#756f6b" text-anchor="middle" textLength="362" lengthAdjust="spacingAndGlyphs">To continue, finish required fields</text>
<circle cx="2641" cy="1547" r="44" fill="#3d4391" filter="url(#ns)"/>
<path d="M2641 1524c14 0 23 9 23 21s-9 22-23 22c-3 0-5-1-7-1l-8 4 3-8c-7-4-11-10-11-17 0-12 9-21 23-21z" fill="#fff"/>
<text x="2717" y="1621" font-size="18" fill="#999" text-anchor="end" textLength="247" lengthAdjust="spacingAndGlyphs">ver. 2025-07-11T12:57-d387dfd3</text>

<!-- bottom toolbar -->
<rect x="353" y="1568" width="157" height="48" rx="7" fill="#fffdf9" filter="url(#ns)"/>
<circle cx="381" cy="1592" r="13" fill="none" stroke="#111" stroke-width="2.4"/><ellipse cx="381" cy="1592" rx="6" ry="13" fill="none" stroke="#111" stroke-width="2"/><path d="M368 1592h26" stroke="#111" stroke-width="2"/>
<text x="404" y="1601" font-size="22" fill="#201515" textLength="93" lengthAdjust="spacingAndGlyphs">Variables</text>
<rect x="520" y="1568" width="203" height="48" rx="7" fill="#fffdf9" filter="url(#ns)"/>
<g fill="none" stroke="#111" stroke-width="2.6"><rect x="533" y="1582" width="9" height="9"/><rect x="533" y="1596" width="9" height="9"/><rect x="546" y="1596" width="9" height="9"/><path d="M550 1580v13M544 1586h12"/><path d="M592 1579l-12 15h8l-3 12 12-16h-8z"/><path d="M625 1606l8-9"/><path d="M642 1582a9 9 0 1 0 3 13l-9-5z"/></g>
<rect x="665" y="1578" width="2" height="28" fill="#e0ddd5"/>
<use href="#srch" x="684" y="1578" width="30" height="30" color="#111"/>
<rect x="269" y="1570" width="44" height="44" rx="6" fill="#3a3230" stroke="url(#ai)" stroke-width="4"/>
<path d="M289 1581q2 9 11 11-9 2-11 11-2-9-11-11 9-2 11-11z" fill="#ff5a1f"/><path d="M299 1597l1 4 4 1-4 1-1 4-1-4-4-1 4-1z" fill="#ff5a1f"/>

<!-- modal -->
<rect x="1319" y="811" width="606" height="678" rx="7" fill="#fffefa" stroke="#dedcd5" stroke-width="1.5" filter="url(#sh)"/>
<text x="1356" y="866" font-size="21" font-weight="700" fill="#201515" textLength="266" lengthAdjust="spacingAndGlyphs">Select value for Transform</text>
<rect x="1632.5" y="843.5" width="66" height="31" rx="3" fill="#fffefa" stroke="#b0ada5" stroke-width="1.4"/>
<text x="1665" y="866" font-size="20" fill="#6f6a66" text-anchor="middle">Static</text>
<use href="#x" x="1880" y="834" width="21" height="21" color="#111"/>
<rect x="1339" y="896" width="562" height="54" rx="3" fill="#fffefa" stroke="#6657e6" stroke-width="3.6"/>
<use href="#srch" x="1351" y="911" width="26" height="26" color="#666"/>
<text x="1391" y="930" font-size="20" fill="#201515">text</text>
<use href="#x" x="1862" y="910" width="20" height="20" color="#888"/>
<rect x="1898" y="958" width="6" height="292" rx="3" fill="#d5d3cb"/>
<g fill="#fffefa" stroke="#b8b5ae" stroke-width="3"><circle cx="1373" cy="985" r="11.5"/><circle cx="1373" cy="1059" r="11.5"/><circle cx="1373" cy="1135" r="11.5"/><circle cx="1373" cy="1210" r="11.5"/><circle cx="1373" cy="1285" r="11.5"/></g>
<g font-size="19.5" font-weight="700" fill="#201515">
<text x="1401" y="988" textLength="86" lengthAdjust="spacingAndGlyphs">Split Text</text>
<text x="1401" y="1063" textLength="400" lengthAdjust="spacingAndGlyphs">Split Text into Chunks for AI Prompts (beta)</text>
<text x="1401" y="1139" textLength="202" lengthAdjust="spacingAndGlyphs">Extract Email Address</text>
<text x="1401" y="1214" textLength="145" lengthAdjust="spacingAndGlyphs">Extract Number</text>
<text x="1401" y="1289" textLength="138" lengthAdjust="spacingAndGlyphs">Extract Pattern</text>
</g>
<g font-size="19.5" fill="#8a8682">
<text x="1401" y="1017" textLength="124" lengthAdjust="spacingAndGlyphs">ID: string.split</text>
<text x="1401" y="1092" textLength="241" lengthAdjust="spacingAndGlyphs">ID: string.split_into_chunks</text>
<text x="1401" y="1167" textLength="236" lengthAdjust="spacingAndGlyphs">ID: string.email_extract_v2</text>
<text x="1401" y="1243" textLength="228" lengthAdjust="spacingAndGlyphs">ID: string.number_extract</text>
<text x="1401" y="1318" textLength="176" lengthAdjust="spacingAndGlyphs">ID: string.re_extract</text>
</g>
<path d="M1364 1351q9-4 18 0M1401 1350h30M1440 1350h60M1510 1350h50" stroke="#ddd" stroke-width="1.5" fill="none"/>
<rect x="1319" y="1366" width="606" height="1.6" fill="#e2e0d9"/>
<text x="1337" y="1405" font-size="20" fill="#201515" textLength="214" lengthAdjust="spacingAndGlyphs">All results were loaded.</text>
<path d="M1337 1414h214" stroke="#201515" stroke-width="1.5" stroke-dasharray="1.5 1.5"/>
<rect x="1337" y="1438" width="151" height="38" rx="5" fill="#eae8de"/>
<path d="M1353 1448v18M1344 1457h18" stroke="#7a7470" stroke-width="2.2"/>
<text x="1376" y="1464" font-size="20" fill="#6f6a66" textLength="98" lengthAdjust="spacingAndGlyphs">Load more</text>
<rect x="1495" y="1439" width="190" height="36" rx="5" fill="#fffefa" stroke="#a9a69e" stroke-width="1.6"/>
<path d="M1515 1449a9 9 0 1 1-7 2M1509 1444l0 8 7-1" fill="none" stroke="#2b2523" stroke-width="2"/>
<text x="1534" y="1464" font-size="20" fill="#3a3432" textLength="138" lengthAdjust="spacingAndGlyphs">Refresh results</text>
<rect x="1692.5" y="1439" width="188" height="36" rx="5" fill="#fffefa" stroke="#a9a69e" stroke-width="1.6"/>
<circle cx="1715" cy="1457" r="10" fill="none" stroke="#2b2523" stroke-width="2"/><path d="M1711 1453l8 8M1719 1453l-8 8" stroke="#2b2523" stroke-width="2"/>
<text x="1732" y="1464" font-size="20" fill="#3a3432" textLength="136" lengthAdjust="spacingAndGlyphs">Clear selection</text>

<!-- menu bar -->
<rect width="2880" height="48" fill="#ecebe5"/>
<path d="M66 8q-6 1-7 7 6 0 7-7zM55 15c-7 0-12 5-12 12 0 8 5 14 9 14 3 0 3-1 6-1s3 1 6 1c4 0 8-6 9-11-6-3-6-11 0-14-3-3-6-3-9-2-3 1-3 2-5 2s-2-1-4-1z" fill="#111"/>
<text class="m b" x="108" y="32" textLength="100" lengthAdjust="spacingAndGlyphs">Chrome</text>
<text class="m" x="250" y="32" textLength="42" lengthAdjust="spacingAndGlyphs">File</text>
<text class="m" x="334" y="32" textLength="46" lengthAdjust="spacingAndGlyphs">Edit</text>
<text class="m" x="422" y="32" textLength="58" lengthAdjust="spacingAndGlyphs">View</text>
<text class="m" x="522" y="32" textLength="87" lengthAdjust="spacingAndGlyphs">History</text>
<text class="m" x="650" y="32" textLength="135" lengthAdjust="spacingAndGlyphs">Bookmarks</text>
<text class="m" x="826" y="32" textLength="90" lengthAdjust="spacingAndGlyphs">Profiles</text>
<text class="m" x="958" y="32" textLength="43" lengthAdjust="spacingAndGlyphs">Tab</text>
<text class="m" x="1042" y="32" textLength="96" lengthAdjust="spacingAndGlyphs">Window</text>
<text class="m" x="1180" y="32" textLength="55" lengthAdjust="spacingAndGlyphs">Help</text>
<path d="M1974 9l6 6-6 6-6-6zM1984 9l6 6-6 6-6-6zM1968 19l6 6-6 6-6-6zM1978 25l6 6-6 6-6-6z" fill="#888"/><circle cx="1988" cy="29" r="9" fill="#222"/>
<path d="M2038 31a12 12 0 0 1 18-19l8 8-4 14-14 2z" fill="none" stroke="#222" stroke-width="3"/><path d="M2056 24l10 6-10 8z" fill="#1e7fd6"/>
<path d="M2134 10a15 15 0 1 0 8 24 13 13 0 0 1-8-24z" fill="#222"/>
<rect x="2185" y="13" width="44" height="22" rx="5" fill="none" stroke="#333" stroke-width="2.4"/><path d="M2212 14l-14 12h8l-4 8 14-12h-8z" fill="#222"/>
<path d="M2277 16l12 15-6 7V9l6 7-12 15" fill="none" stroke="#222" stroke-width="2.2"/>
<path d="M2340 20a20 20 0 0 1 28 0M2346 26a12 12 0 0 1 16 0" fill="none" stroke="#222" stroke-width="3.5"/><circle cx="2354" cy="33" r="3.5" fill="#222"/>
<circle cx="2421" cy="21" r="9" fill="none" stroke="#222" stroke-width="2.8"/><path d="M2427 28l7 9" stroke="#222" stroke-width="2.8"/>
<rect x="2478" y="10" width="26" height="13" rx="6.5" fill="none" stroke="#222" stroke-width="2.4"/><circle cx="2498" cy="16" r="4" fill="#222"/><rect x="2478" y="26" width="26" height="13" rx="6.5" fill="#222"/><circle cx="2484" cy="32" r="4" fill="#eee"/>
<ellipse cx="2554" cy="24" rx="13" ry="14" fill="#5b6fd0"/><path d="M2548 14a13 14 0 0 1 18 8l-9 4z" fill="#3ec6d8"/><path d="M2543 30a13 14 0 0 0 16 8l-2-10z" fill="#d860a8"/>
<text x="2600" y="32" font-size="26" fill="#111" textLength="242" lengthAdjust="spacingAndGlyphs">Fri Jul 11  11:17 AM</text>

<!-- dock -->
<rect x="105" y="1646" width="2668" height="143" rx="48" fill="url(#dock)" stroke="#b8b6a8" stroke-opacity=".7" stroke-width="2"/>
<rect x="105" y="1646" width="2668" height="143" rx="48" fill="url(#dockv)"/>
<rect x="1716" y="1664" width="2" height="108" fill="#6c6a60"/><rect x="2378" y="1664" width="2" height="108" fill="#4e4a40"/>
<!-- finder -->
<rect x="125" y="1667" width="92" height="93" rx="20" fill="url(#fb)"/>
<path d="M178 1667h19q20 0 20 20v53q0 20-20 20h-13q-6-20-6-36h-14q0-30 14-57z" fill="#dfe8f0"/>
<rect x="147" y="1694" width="4" height="12" rx="2" fill="#222"/><rect x="191" y="1694" width="4" height="12" rx="2" fill="#222"/>
<path d="M142 1727q28 26 58 0" fill="none" stroke="#222" stroke-width="3"/>
<!-- safari -->
<rect x="247" y="1667" width="92" height="93" rx="20" fill="#f4f4f4"/><circle cx="293" cy="1713" r="39" fill="#1f8ce8"/><circle cx="293" cy="1713" r="33" fill="none" stroke="#cbe4f7" stroke-width="4" stroke-dasharray="1.5 3"/>
<path d="M322 1682l-24 36-10-9z" fill="#f03e3e"/><path d="M264 1744l34-26-10-9z" fill="#f4f4f4"/>
<!-- maps -->
<rect x="367" y="1667" width="92" height="93" rx="20" fill="#4cd964"/><rect x="400" y="1667" width="20" height="93" fill="#2d7ef0"/><path d="M367 1710l92 40v10H367z" fill="#f4f4f4"/><path d="M367 1720h32v40h-14q-18 0-18-20z" fill="#e88bc8"/><path d="M418 1745h40l1-5v0q0 20-20 20h-21z" fill="#ffd633"/><path d="M427 1667a32 32 0 0 0 32 32" fill="none" stroke="#ddd" stroke-width="8"/>
<circle cx="401" cy="1724" r="23" fill="#dfe3ea"/><circle cx="401" cy="1724" r="18" fill="#0a84ff"/><path d="M401 1710l9 24-9-5-9 5z" fill="#fff"/>
<!-- mail -->
<rect x="489" y="1667" width="92" height="93" rx="20" fill="url(#ml)"/><rect x="503" y="1692" width="64" height="42" rx="4" fill="#ecebe8"/><path d="M503 1694l32 24 32-24M503 1733l22-22M567 1733l-22-22" fill="none" stroke="#aaa" stroke-width="1.5"/>
<!-- chrome -->
<rect x="612" y="1667" width="90" height="93" rx="20" fill="#f8f8f8"/><circle cx="657" cy="1713" r="40" fill="#34a853"/><path d="M657 1673a40 40 0 0 1 35 20h-35a20 20 0 0 0-18 11l-17-29a40 40 0 0 1 35-2z" fill="#ea4335"/><path d="M692 1693a40 40 0 0 1-35 60l18-30a20 20 0 0 0 0-20z" fill="#fbbc05"/><circle cx="657" cy="1713" r="19" fill="#fff"/><circle cx="657" cy="1713" r="14" fill="#3b78e7"/>
<!-- facetime -->
<rect x="733" y="1667" width="89" height="93" rx="20" fill="url(#gr)"/><rect x="746" y="1693" width="46" height="42" rx="9" fill="#e6f4e8"/><path d="M796 1707l15-12v38l-15-12z" fill="#e6f4e8"/>
<!-- Lr -->
<rect x="853" y="1667" width="93" height="93" rx="20" fill="#001e36"/><text x="900" y="1733" font-size="60" font-weight="700" fill="#31a8ff" text-anchor="middle" textLength="50" lengthAdjust="spacingAndGlyphs">Lr</text>
<!-- Calendar -->
<rect x="975" y="1667" width="92" height="93" rx="20" fill="#f8f8f8"/><path d="M995 1667h52q20 0 20 20v9h-92v-9q0-20 20-20z" fill="#ef5350"/>
<text x="1021" y="1689" font-size="17" font-weight="700" fill="#fff" text-anchor="middle">JUL</text><text x="1018" y="1745" font-size="58" fill="#222" text-anchor="middle" textLength="40" lengthAdjust="spacingAndGlyphs">11</text>
<!-- Notes -->
<rect x="1097" y="1667" width="92" height="93" rx="20" fill="#f2f1ec"/><path d="M1117 1667h52q20 0 20 20v3h-92v-3q0-20 20-20z" fill="#ffcc1f"/><rect x="1097" y="1690" width="92" height="4" fill="#bbb"/><path d="M1097 1713h92M1097 1736h92" stroke="#ddd" stroke-width="2"/>
<!-- Find My -->
<rect x="1220" y="1667" width="91" height="93" rx="20" fill="#e6e6e6"/><ellipse cx="1265" cy="1712" rx="39" ry="39" fill="#14c968"/><path d="M1265 1714l-18-38q18-8 36 0z" fill="#08a3ea"/><circle cx="1265" cy="1712" r="11" fill="#fff"/><circle cx="1265" cy="1712" r="7" fill="#0a6fe0"/>
<!-- LrC -->
<rect x="1338" y="1667" width="94" height="93" rx="20" fill="#001e36"/><text x="1385" y="1733" font-size="60" font-weight="700" fill="#31a8ff" text-anchor="middle" textLength="73" lengthAdjust="spacingAndGlyphs">LrC</text>
<!-- Ps -->
<rect x="1460" y="1667" width="93" height="93" rx="20" fill="#001e36"/><text x="1508" y="1731" font-size="56" font-weight="700" fill="#31a8ff" text-anchor="middle" textLength="55" lengthAdjust="spacingAndGlyphs">Ps</text>
<!-- Messages -->
<rect x="1583" y="1667" width="92" height="93" rx="20" fill="url(#gr)"/><ellipse cx="1629" cy="1711" rx="34" ry="29" fill="#eef5ee"/><path d="M1612 1730l-4 13 14-8z" fill="#eef5ee"/>
<rect x="1626" y="1656" width="63" height="43" rx="21" fill="#f44336" stroke="#9a9a9a" stroke-width="1.5"/><text x="1657" y="1687" font-size="26" fill="#fff" text-anchor="middle" textLength="52" lengthAdjust="spacingAndGlyphs">1,415</text>
<!-- Octopus -->
<rect x="1756" y="1663" width="98" height="99" rx="22" fill="#0a5fe0"/><use href="#oct" x="1773" y="1678" width="64" height="72" color="#fff"/>
<!-- Numbers -->
<rect x="1882" y="1667" width="90" height="93" rx="20" fill="#f5fbf5"/><g stroke="#d6f2d6" stroke-width="1"><path d="M1890 1680h75M1890 1695h75M1890 1710h75M1890 1725h75M1890 1740h75M1900 1670v85M1915 1670v85M1930 1670v85M1945 1670v85"/></g>
<rect x="1898" y="1716" width="11" height="30" fill="#e23e50"/><rect x="1913" y="1698" width="12" height="48" fill="#f0930c"/><rect x="1928" y="1679" width="13" height="67" fill="#42c73e"/><rect x="1944" y="1689" width="12" height="57" fill="#1f7ee8"/>
<!-- i -->
<rect x="1997" y="1663" width="100" height="100" rx="24" fill="#12284c"/><ellipse cx="2047" cy="1686" rx="13" ry="14" fill="none" stroke="#f01e6e" stroke-width="4"/><path d="M2036 1710h18v30h8v10h-30v-10h8v-20h-6z" fill="#f01e6e"/>
<!-- dictionary -->
<path d="M2131 1756v14l9-5 10 5v-14z" fill="#d8352a"/><rect x="2124" y="1667" width="90" height="93" rx="16" fill="#a34b48"/><text x="2169" y="1727" font-size="50" fill="#f4ecdd" text-anchor="middle" style="font-family:'Liberation Serif',serif">Aa</text>
<!-- settings -->
<rect x="2245" y="1667" width="92" height="93" rx="20" fill="url(#set)"/><circle cx="2291" cy="1713" r="39" fill="#2c2c2c"/><circle cx="2291" cy="1713" r="35" fill="none" stroke="#999" stroke-width="5" stroke-dasharray="2 3"/><circle cx="2291" cy="1713" r="28" fill="#777"/><circle cx="2291" cy="1713" r="23" fill="#3a3a3a"/><circle cx="2291" cy="1713" r="18" fill="#8b8b8b"/><path d="M2291 1713v-25M2291 1713l-21 13M2291 1713l21 13" stroke="#333" stroke-width="5"/>
<!-- ?? -->
<text x="2468" y="1757" font-size="122" fill="#c8c6c0" text-anchor="middle">?</text>
<text x="2590" y="1757" font-size="122" fill="#c8c6c0" text-anchor="middle">?</text>
<!-- trash -->
<path d="M2669 1677q0-14 40-14t40 14l-10 72q-2 15-30 15t-30-15z" fill="url(#tr)"/>
<ellipse cx="2709" cy="1678" rx="37" ry="13" fill="#cfcfcf"/>
<!-- dots -->
<g fill="#111"><circle cx="170" cy="1782" r="4"/><circle cx="292" cy="1782" r="4"/><circle cx="656" cy="1782" r="4"/><circle cx="1020" cy="1782" r="4"/><circle cx="1142" cy="1782" r="4"/><circle cx="1384" cy="1782" r="4"/><circle cx="1506" cy="1782" r="4"/><circle cx="1628" cy="1782" r="4"/><circle cx="1804" cy="1782" r="4"/><circle cx="1926" cy="1782" r="4"/><circle cx="2046" cy="1782" r="4"/><circle cx="2168" cy="1782" r="4"/><circle cx="2290" cy="1782" r="4"/></g>
</svg>
</body></html>
